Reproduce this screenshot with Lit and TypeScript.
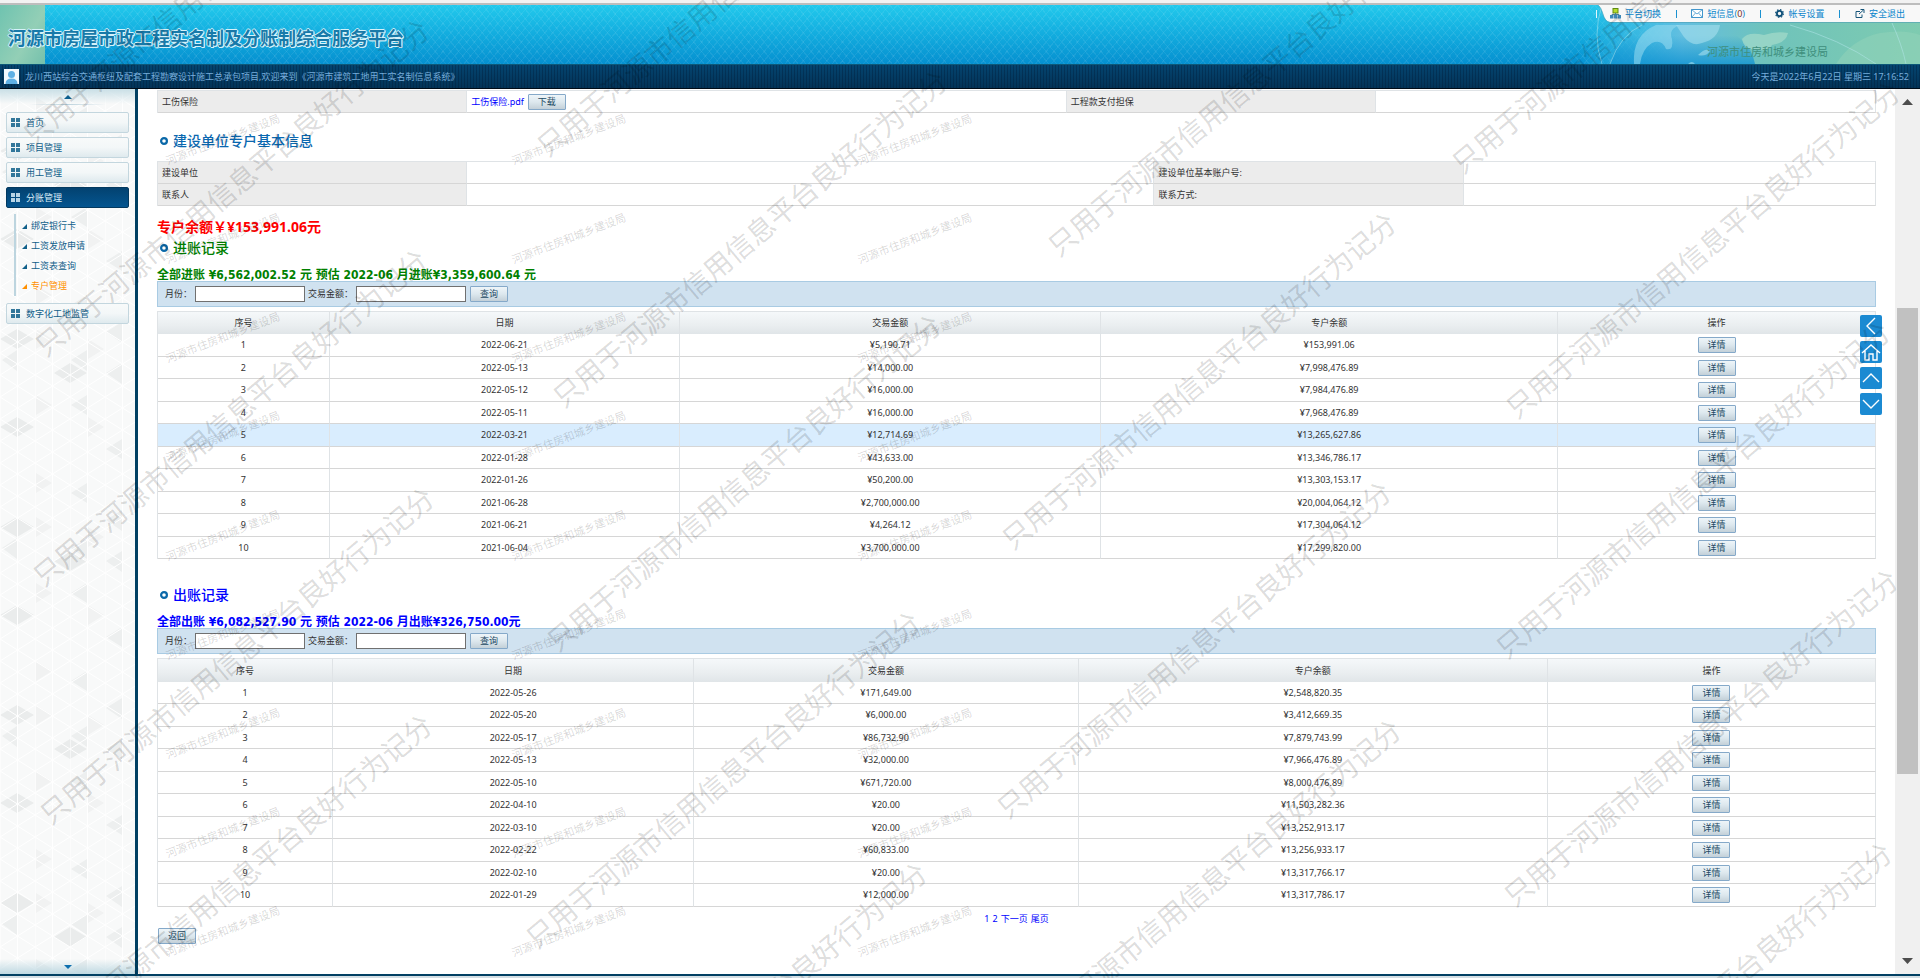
import { LitElement, html, css, svg } from "lit";
import { customElement, property } from "lit/decorators.js";

interface Entry {
  date: string;
  amount: string;
  balance: string;
}

const toEntries = (rows: string[]): Entry[] =>
  rows.map((row) => {
    const [date, amount, balance] = row.split(" ");
    return { date, amount: "¥" + amount, balance: "¥" + balance };
  });

const INCOME = toEntries([
  "2022-06-21 5,190.71 153,991.06",
  "2022-05-13 14,000.00 7,998,476.89",
  "2022-05-12 16,000.00 7,984,476.89",
  "2022-05-11 16,000.00 7,968,476.89",
  "2022-03-21 12,714.69 13,265,627.86",
  "2022-01-28 43,633.00 13,346,786.17",
  "2022-01-26 50,200.00 13,303,153.17",
  "2021-06-28 2,700,000.00 20,004,064.12",
  "2021-06-21 4,264.12 17,304,064.12",
  "2021-06-04 3,700,000.00 17,299,820.00",
]);

const EXPENSE = toEntries([
  "2022-05-26 171,649.00 2,548,820.35",
  "2022-05-20 6,000.00 3,412,669.35",
  "2022-05-17 86,732.90 7,879,743.99",
  "2022-05-13 32,000.00 7,966,476.89",
  "2022-05-10 671,720.00 8,000,476.89",
  "2022-04-10 20.00 11,503,282.36",
  "2022-03-10 20.00 13,252,913.17",
  "2022-02-22 60,833.00 13,256,933.17",
  "2022-02-10 20.00 13,317,766.17",
  "2022-01-29 12,000.00 13,317,786.17",
]);

const buttonStyles = css`
  .btn {
    box-sizing: border-box;
    width: 38px;
    height: 16px;
    padding: 0;
    border: 1px solid #85a9c9;
    border-radius: 1px;
    background: linear-gradient(#eef5f9, #dde8ee 50%, #c3d0d8);
    color: #1d4a63;
    font: inherit;
    line-height: 14px;
    cursor: pointer;
  }
`;

@customElement("water-mark")
export class WaterMark extends LitElement {
  static styles = css`
    :host {
      position: absolute;
      inset: 0;
      overflow: hidden;
      pointer-events: none;
      z-index: 10;
    }
    .layer {
      display: block;
      width: 100%;
      height: 100%;
      font-family: "Noto Sans CJK SC", sans-serif;
    }
    .usage {
      font-size: 28px;
      font-weight: 400;
      fill: rgba(0, 0, 0, 0.15);
    }
    .bureau {
      font-size: 11px;
      fill: rgba(0, 0, 0, 0.17);
    }
  `;

  private usage = [
    [38, 130], [50, 341], [48, 571], [55, 809], [53, 1036],
    [552, 141], [568, 392], [562, 636], [541, 933], [548, 1184],
    [1063, 241], [1017, 534], [1012, 803], [1022, 1041],
    [1467, 158], [1521, 403], [1511, 643], [1519, 891], [1513, 1164],
  ];

  render() {
    const bureau = [172, 518, 864].flatMap((x) =>
      Array.from({ length: 9 }, (_, k) => [x, 159 + 99 * k]),
    );
    return html`<svg class="layer" aria-hidden="true">
      ${this.usage.map(
        ([x, y]) => svg`<text class="usage" x="-14" y="10"
          transform="translate(${x} ${y}) rotate(-40)">只用于河源市信用信息平台良好行为记分</text>`,
      )}
      ${bureau.map(
        ([x, y]) => svg`<text class="bureau" x="-6" y="4"
          transform="translate(${x} ${y}) rotate(-21)">河源市住房和城乡建设局</text>`,
      )}
    </svg>`;
  }
}

@customElement("top-header")
export class TopHeader extends LitElement {
  static styles = css`
    :host {
      display: block;
    }
    a {
      color: #0a86cc;
      text-decoration: none;
    }
    .strip {
      height: 3px;
      background: #f2f2f2;
      border-bottom: 2px solid #bdbdbd;
    }
    .banner {
      position: relative;
      display: flex;
      justify-content: space-between;
      height: 59px;
      background:
        repeating-linear-gradient(50deg, transparent 0 5px, rgba(255, 255, 255, 0.07) 5px 6px),
        repeating-linear-gradient(-50deg, transparent 0 5px, rgba(255, 255, 255, 0.07) 5px 6px),
        linear-gradient(#22c9ec, #14afe0 45%, #0590d0);
    }
    .patch {
      position: absolute;
      left: 0;
      top: 0;
      width: 45px;
      height: 100%;
      background: linear-gradient(120deg, #6fc3b0, #93cfb6 60%, #74c0ac);
    }
    .globe {
      position: absolute;
      right: 0;
      top: 0;
      width: 340px;
      height: 100%;
    }
    .name {
      position: relative;
      margin: 0;
      padding: 21px 0 0 8px;
      font-size: 18px;
      line-height: 24px;
      font-weight: 700;
      color: #187aa9;
      text-shadow: 1px 0 #d5f2fa, -1px 0 #d5f2fa, 0 1px #d5f2fa, 0 -1px #d5f2fa, 1px 1px #d5f2fa;
    }
    .side {
      position: relative;
      display: flex;
      flex-direction: column;
      width: 324px;
    }
    .tools {
      display: flex;
      align-items: center;
      justify-content: space-between;
      height: 17px;
      box-sizing: border-box;
      padding: 0 15px 0 14px;
    }
    .tab {
      position: absolute;
      left: 0;
      top: 0;
      width: 100%;
      height: 18px;
    }
    .tool {
      position: relative;
      display: flex;
      align-items: center;
      gap: 4px;
    }
    .bar {
      position: relative;
      width: 1px;
      height: 8px;
      background: #1b91d0;
    }
    .edge {
      position: absolute;
      left: 0;
      top: 5px;
      width: 1px;
      height: 8px;
      background: #e4f7fc;
    }
    .count {
      color: #7a2a1c;
    }
    .dept {
      padding: 22px 0 0 111px;
      font-size: 11px;
      line-height: 16px;
      color: #3f8f7c;
    }
    .welcome {
      display: flex;
      align-items: center;
      gap: 6px;
      box-sizing: border-box;
      height: 25px;
      padding: 0 11px 0 4px;
      border-top: 1px solid #0d5878;
      border-bottom: 1px solid #000c18;
      background:
        repeating-linear-gradient(90deg, transparent 0 2px, rgba(0, 20, 45, 0.3) 2px 3px),
        linear-gradient(#04446f, #033357);
      color: #77addb;
    }
    .clock {
      margin-left: auto;
    }
  `;

  render() {
    return html`
      <div class="strip"></div>
      <div class="banner">
        <div class="patch"></div>
        <svg class="globe" viewBox="0 0 340 59" preserveAspectRatio="none" aria-hidden="true">
          <defs>
            <linearGradient id="sea">
              <stop offset="0" stop-color="#3bc0e6" stop-opacity="0" />
              <stop offset=".12" stop-color="#47bfe4" stop-opacity=".5" />
              <stop offset=".3" stop-color="#63bfe0" />
              <stop offset=".55" stop-color="#6fc3bb" />
              <stop offset="1" stop-color="#7ecbb0" />
            </linearGradient>
            <linearGradient id="deep" x1="0" y1="0" x2="0" y2="1">
              <stop offset=".3" stop-color="#1193d2" stop-opacity="0" />
              <stop offset="1" stop-color="#1193d2" stop-opacity=".8" />
            </linearGradient>
          </defs>
          <rect width="340" height="59" fill="url(#sea)" />
          <path d="M30 59 Q40 25 70 18 H130 Q170 30 175 59Z" fill="url(#deep)" />
          <path d="M54 59 Q52 30 76 20 H100 Q88 24 92 34 Q94 46 86 44 Q82 34 72 38 Q62 44 60 59Z" fill="#9bdcf0" opacity=".55" />
          <path d="M96 20 H140 Q138 34 122 38 Q112 42 104 32 Z M118 50 q8 -8 12 -4 q-4 6 -12 4z M108 59 q4 -4 7 0z" fill="#a7dfee" opacity=".6" />
          <path d="M162 34 Q168 26 184 30 Q196 26 208 28 Q206 38 192 40 Q188 48 176 44 Q164 46 162 34Z" fill="#a5dccb" opacity=".7" />
          <path d="M256 59 Q272 34 300 28 Q325 24 340 30 V59Z" fill="#93d3ba" opacity=".5" />
          <path d="M22 0 Q12 30 22 59 M30 59 Q40 30 62 20 M210 20 Q260 34 296 59 M312 18 Q322 40 326 59" fill="none" stroke="#b6e8ee" stroke-opacity=".5" />
        </svg>
        <h1 class="name">河源市房屋市政工程实名制及分账制综合服务平台</h1>
        <div class="side">
          <span class="edge"></span>
          <svg class="tab" viewBox="0 0 324 18" preserveAspectRatio="none" aria-hidden="true">
            <path d="M2 0 H324 V17 H14 Q9 16 7 9 Q5 2 2 0Z" fill="#f8f8f8" />
            <path d="M2 0 Q5 2 7 9 Q9 17 14 17.500 H324" fill="none" stroke="#4f9fb4" stroke-opacity=".6" />
          </svg>
          <div class="tools">
            <a class="tool" href="#">
              <svg width="11" height="11" viewBox="0 0 11 11" aria-hidden="true">
                <rect x="3" y="0.500" width="5" height="4.500" fill="#b5dc2c" stroke="#5e8a12" />
                <path d="M5.500 5 V7 M2 8 V6.500 H9 V8" fill="none" stroke="#4a7f9a" />
                <path d="M0 7h3.500v3.500H0z M4 7h3v3.500H4z M7.500 7H11v3.500H7.500z" fill="#3d88b8" />
              </svg>平台切换</a>
            <span class="bar"></span>
            <a class="tool" href="#">
              <svg width="12" height="9" viewBox="0 0 12 9" aria-hidden="true">
                <rect x=".5" y=".5" width="11" height="8" fill="#fff" stroke="#4296cc" />
                <path d="M.5 .5 L6 5 L11.500 .5 M.5 8.500 L4.500 4 M11.500 8.500 L7.500 4" fill="none" stroke="#6badd8" />
              </svg><span>短信息(<span class="count">0</span>)</span></a>
            <span class="bar"></span>
            <a class="tool" href="#">
              <svg width="9" height="9" viewBox="0 0 9 9" aria-hidden="true">
                <circle cx="4.500" cy="4.500" r="2.600" fill="none" stroke="#0e4f78" stroke-width="1.800" />
                <circle cx="4.500" cy="4.500" r="3.900" fill="none" stroke="#0e4f78" stroke-width="1.100" stroke-dasharray="1.500 1.560" />
              </svg>帐号设置</a>
            <span class="bar"></span>
            <a class="tool" href="#">
              <svg width="10" height="9" viewBox="0 0 10 9" aria-hidden="true">
                <path d="M5 2.500 H1 V8.500 H7 V5.500 M4 5 L8.500 1 M5.500 .5 H9 V4" fill="none" stroke="#17557a" />
              </svg>安全退出</a>
          </div>
          <div class="dept">河源市住房和城乡建设局</div>
        </div>
      </div>
      <div class="welcome">
        <svg width="15" height="15" viewBox="0 0 15 15" aria-hidden="true">
          <rect width="15" height="15" fill="#f3f9fd" />
          <circle cx="7.500" cy="5.500" r="3.500" fill="#5fb0e4" />
          <path d="M1.500 15 Q1.500 9.500 7.500 9.500 T13.500 15Z" fill="#5fb0e4" />
        </svg>
        <span>龙川西站综合交通枢纽及配套工程勘察设计施工总承包项目,欢迎来到《河源市建筑工地用工实名制信息系统》</span>
        <span class="clock">今天是2022年6月22日 星期三 17:16:52</span>
      </div>
    `;
  }
}

@customElement("side-menu")
export class SideMenu extends LitElement {
  static styles = css`
    :host {
      position: relative;
      display: flex;
      flex-direction: column;
      box-sizing: border-box;
      width: 138px;
      border-right: 3px solid #014063;
      background: #f8f9f9;
    }
    a {
      color: #11608a;
      text-decoration: none;
    }
    .tiles {
      position: absolute;
      inset: 0;
      width: 100%;
      height: 100%;
    }
    .cap {
      position: relative;
      display: flex;
      justify-content: center;
      align-items: center;
      height: 15px;
      background: linear-gradient(#c9dfe6, rgba(246, 247, 247, 0));
    }
    .cap.low {
      margin-top: auto;
      background: linear-gradient(rgba(246, 247, 247, 0), #bfd9e2);
    }
    .rule {
      position: relative;
      height: 1px;
      margin: 0 29px;
      background: linear-gradient(90deg, transparent, #bcd3dd, transparent);
    }
    .nav {
      position: relative;
      display: flex;
      flex-direction: column;
      gap: 4px;
      padding: 7px 6px;
    }
    .item {
      display: flex;
      align-items: center;
      gap: 6px;
      box-sizing: border-box;
      height: 21px;
      padding: 0 4px;
      border: 1px solid #c3d6de;
      border-radius: 2px;
      background: linear-gradient(#f8fafa, #f3f7f8 50%, #dfeaee);
    }
    .item.open {
      border-color: #03395f;
      background: linear-gradient(#034270, #045590);
      color: #d9edf8;
    }
    .sub {
      display: flex;
      flex-direction: column;
      margin: 2px 0 3px 8px;
      padding: 2px 0 0 6px;
      border-left: 2px solid #bdd5df;
    }
    .leaf {
      display: flex;
      align-items: center;
      gap: 4px;
      height: 20px;
    }
    .leaf.on {
      color: #ff9000;
    }
  `;

  private icon = html`<svg width="9" height="9" viewBox="0 0 9 9" aria-hidden="true">
    <path d="M0 0h4v4H0z M5 0h4v4H5z M0 5h4v4H0z M5 5h4v4H5z" fill="currentColor" opacity=".85" />
  </svg>`;

  private item(label: string, open = false) {
    return html`<a class="item ${open ? "open" : ""}" href="#">${this.icon}<span>${label}</span></a>`;
  }

  private leaf(label: string, on = false) {
    return html`<a class="leaf ${on ? "on" : ""}" href="#">
      <svg width="5" height="5" viewBox="0 0 5 5" aria-hidden="true"><path d="M5 0V5H0Z" fill="currentColor" /></svg>
      <span>${label}</span></a>`;
  }

  render() {
    return html`
      <svg class="tiles" aria-hidden="true">
        <defs>
          <pattern id="mesh" width="35" height="22" patternUnits="userSpaceOnUse">
            <path d="M0 0 L35 22 M35 0 L0 22 M0 0 V22 M17.500 0 V22" fill="none" stroke="#fff" />
          </pattern>
          <pattern id="facets" width="140" height="188" patternUnits="userSpaceOnUse">
            <path d="M0 62 L17 52 L34 62 L17 72Z M54 96 L70 86 L87 96 L70 106Z M0 150 L17 140 L34 150 L17 160Z" fill="#eaecec" />
            <path d="M2 83 L17 73 V94Z M71 83 L87 73 V94Z M106 55 L122 45 V66Z M106 96 L122 86 V107Z M71 128 L87 118 V138Z M106 172 L122 162 V182Z M71 28 L87 18 V38Z" fill="#edefef" />
            <path d="M36 52 L52 62 L36 72Z M36 118 L52 128 L36 138Z M88 62 L104 72 L88 82Z M36 8 L52 18 L36 28Z M88 140 L104 150 L88 160Z" fill="#f1f2f2" />
          </pattern>
        </defs>
        <rect width="100%" height="100%" fill="url(#facets)" />
        <rect width="100%" height="100%" fill="url(#mesh)" />
      </svg>
      <div class="cap">
        <svg width="8" height="4" viewBox="0 0 8 4" aria-hidden="true"><path d="M0 4 L4 0 L8 4Z" fill="#0d5f8e" /></svg>
      </div>
      <div class="rule"></div>
      <nav class="nav">
        ${this.item("首页")} ${this.item("项目管理")} ${this.item("用工管理")} ${this.item("分账管理", true)}
        <div class="sub">
          ${this.leaf("绑定银行卡")} ${this.leaf("工资发放申请")} ${this.leaf("工资表查询")}
          ${this.leaf("专户管理", true)}
        </div>
        ${this.item("数字化工地监管")}
      </nav>
      <div class="cap low">
        <svg width="8" height="4" viewBox="0 0 8 4" aria-hidden="true"><path d="M0 0 L4 4 L8 0Z" fill="#0d6fae" /></svg>
      </div>
    `;
  }
}

@customElement("ledger-block")
export class LedgerBlock extends LitElement {
  @property() heading = "";
  @property() summary = "";
  @property({ attribute: false }) rows: Entry[] = [];
  @property({ attribute: false }) widths: number[] = [];
  @property({ type: Number }) marked = 0;
  @property({ reflect: true }) tone = "income";

  static styles = [
    buttonStyles,
    css`
      :host {
        display: block;
        color: #333;
      }
      .title {
        display: flex;
        align-items: center;
        gap: 5px;
        margin: 0;
        padding-left: 3px;
        font-size: 14px;
        line-height: 20px;
        font-weight: 500;
      }
      .total {
        margin: 11px 0 0;
        font-family: "DejaVu Sans Condensed", "Noto Sans CJK SC", sans-serif;
        font-size: 12px;
        line-height: 12px;
        font-weight: 700;
        white-space: nowrap;
      }
      :host([tone="income"]) .tint {
        color: #008000;
      }
      :host([tone="expense"]) .tint {
        color: #0000ff;
      }
      .filter {
        display: flex;
        align-items: center;
        box-sizing: border-box;
        height: 26px;
        margin-bottom: 4px;
        padding-left: 7px;
        border: 1px solid #a9cbe3;
        background: #d0e2f0;
      }
      .month {
        width: 30px;
      }
      .sum {
        width: 48px;
        margin-left: 3px;
      }
      .field {
        box-sizing: border-box;
        width: 110px;
        height: 16px;
        padding: 0 2px;
        border: 1px solid #707070;
        background: #fff;
        font: inherit;
      }
      .filter .btn {
        margin-left: 4px;
      }
      .grid {
        width: 100%;
        table-layout: fixed;
        border-spacing: 0;
        border-top: 1px solid #dfe3e6;
        border-left: 1px solid #dfe3e6;
        text-align: center;
      }
      .grid th,
      .grid td {
        box-sizing: border-box;
        height: 22px;
        padding: 0;
        border-right: 1px solid #dfe3e6;
        border-bottom: 1px solid #d6d6d6;
        line-height: 12px;
        font-weight: 400;
      }
      .grid th {
        border-bottom: 0;
        background: linear-gradient(#f5f8fa, #eaeef0 60%, #e0e5e8);
      }
      :host([tone="income"]) .row:nth-child(odd) td,
      :host([tone="expense"]) .row:nth-child(even) td,
      :host([tone="expense"]) th {
        height: 23px;
      }
      .row.marked td {
        background: #d9edfe;
      }
      .grid .btn {
        display: block;
        margin: 0 auto;
      }
    `,
  ];

  render() {
    const heads = ["序号", "日期", "交易金额", "专户余额", "操作"];
    return html`
      <h2 class="title tint">
        <svg width="8" height="8" viewBox="0 0 8 8" aria-hidden="true">
          <circle cx="4" cy="4" r="2.900" fill="#fff" stroke="#0a68a8" stroke-width="2.200" />
        </svg>${this.heading}
      </h2>
      <p class="total tint">${this.summary}</p>
      <form class="filter" @submit=${(e: Event) => e.preventDefault()}>
        <label class="month" for="month">月份：</label>
        <input class="field" id="month" type="text" />
        <label class="sum" for="sum">交易金额：</label>
        <input class="field" id="sum" type="text" />
        <button class="btn" type="submit">查询</button>
      </form>
      <table class="grid">
        <colgroup>
          ${this.widths.map((w) => html`<col style="width:${w}%" />`)}
        </colgroup>
        <thead>
          <tr>${heads.map((h) => html`<th scope="col">${h}</th>`)}</tr>
        </thead>
        <tbody>
          ${this.rows.map(
            (r, i) => html`<tr class="row ${i + 1 === this.marked ? "marked" : ""}">
              <td>${i + 1}</td>
              <td>${r.date}</td>
              <td>${r.amount}</td>
              <td>${r.balance}</td>
              <td><button class="btn" type="button">详情</button></td>
            </tr>`,
          )}
        </tbody>
      </table>
    `;
  }
}

@customElement("float-tools")
export class FloatTools extends LitElement {
  static styles = css`
    :host {
      position: absolute;
      top: 226px;
      right: 38px;
      display: flex;
      flex-direction: column;
      gap: 4px;
      z-index: 5;
    }
    .tool {
      width: 22px;
      height: 22px;
      padding: 0;
      border: 0;
      border-radius: 2px;
      background: #1b8ad2;
    }
    .glyph {
      display: block;
      fill: none;
      stroke: #fff;
      stroke-width: 1.4;
    }
  `;

  render() {
    const glyphs: [string, string][] = [
      ["收起", "M15 3 L7 11 L15 19"],
      ["首页", "M2 12 L11 4 L20 12 M5 10 V19 H9 V13 H13 V19 H17 V10"],
      ["向上", "M3 15 L11 7 L19 15"],
      ["向下", "M3 7 L11 15 L19 7"],
    ];
    return glyphs.map(
      ([label, d]) => html`<button class="tool" type="button" aria-label=${label}>
        <svg class="glyph" width="22" height="22" viewBox="0 0 22 22"><path d=${d} /></svg>
      </button>`,
    );
  }
}

@customElement("app-root")
export class AppRoot extends LitElement {
  static styles = [
    buttonStyles,
    css`
      :host {
        position: relative;
        display: flex;
        flex-direction: column;
        box-sizing: border-box;
        min-height: 100vh;
        overflow: hidden;
        background: #fff;
        color: #333;
        font-family: "Noto Sans", "Noto Sans CJK SC", sans-serif;
        font-size: 9px;
        line-height: 14px;
      }
      a {
        color: #0000ff;
        text-decoration: none;
      }
      .body {
        position: relative;
        display: flex;
        flex: 1;
      }
      .content {
        flex: 1;
        min-width: 0;
        padding: 1px 19px 16px 19px;
      }
      .foot {
        height: 2px;
        border-top: 2px solid #014063;
        background: #d3dee4;
      }
      .info {
        width: 100%;
        table-layout: fixed;
        border-spacing: 0;
        border-top: 1px solid #dfe3e6;
        border-left: 1px solid #dfe3e6;
        text-align: left;
      }
      .info th,
      .info td {
        box-sizing: border-box;
        height: 22px;
        padding: 0 4px;
        border-right: 1px solid #dfe3e6;
        border-bottom: 1px solid #d6d6d6;
        font-weight: 400;
      }
      .info th {
        background: #ececec;
      }
      .file {
        display: flex;
        align-items: center;
        gap: 4px;
      }
      .title {
        display: flex;
        align-items: center;
        gap: 5px;
        margin: 0;
        padding: 18px 0 10px 3px;
        font-size: 14px;
        line-height: 20px;
        font-weight: 500;
        color: #0a68b0;
      }
      .balance {
        margin: 10px 0 0;
        font-size: 14px;
        line-height: 22px;
        font-weight: 700;
        color: #ff0000;
      }
      .next {
        margin-top: 26px;
      }
      .pages {
        display: flex;
        justify-content: center;
        gap: 3px;
        margin: 5px 0 2px;
      }
      .back {
        display: block;
        margin-left: 1px;
      }
      .scroll {
        display: flex;
        flex-direction: column;
        align-items: center;
        box-sizing: border-box;
        width: 25px;
        padding: 10px 0;
        background: #f0f0f0;
      }
      .lead {
        flex: 203;
      }
      .thumb {
        flex: 466;
        width: 21px;
        background: #c1c1c1;
      }
      .trail {
        flex: 184;
      }
    `,
  ];

  render() {
    return html`
      <top-header></top-header>
      <div class="body">
        <side-menu></side-menu>
        <main class="content">
          <table class="info">
            <colgroup>
              ${[18, 34.9, 18, 29.1].map((w) => html`<col style="width:${w}%" />`)}
            </colgroup>
            <tbody>
              <tr>
                <th scope="row">工伤保险</th>
                <td>
                  <div class="file"><a href="#">工伤保险.pdf</a><button class="btn" type="button">下载</button></div>
                </td>
                <th scope="row">工程款支付担保</th>
                <td></td>
              </tr>
            </tbody>
          </table>
          <h2 class="title">
            <svg width="8" height="8" viewBox="0 0 8 8" aria-hidden="true">
              <circle cx="4" cy="4" r="2.900" fill="#fff" stroke="#0a68a8" stroke-width="2.200" />
            </svg>建设单位专户基本信息
          </h2>
          <table class="info">
            <colgroup>
              ${[18, 40, 18, 24].map((w) => html`<col style="width:${w}%" />`)}
            </colgroup>
            <tbody>
              <tr>
                <th scope="row">建设单位</th>
                <td></td>
                <th scope="row">建设单位基本账户号:</th>
                <td></td>
              </tr>
              <tr>
                <th scope="row">联系人</th>
                <td></td>
                <th scope="row">联系方式:</th>
                <td></td>
              </tr>
            </tbody>
          </table>
          <p class="balance">专户余额￥¥153,991.06元</p>
          <ledger-block
            tone="income"
            heading="进账记录"
            summary="全部进账 ¥6,562,002.52 元 预估 2022-06 月进账¥3,359,600.64 元"
            marked="5"
            .rows=${INCOME}
            .widths=${[10, 20.4, 24.5, 26.6, 18.5]}
          ></ledger-block>
          <ledger-block
            class="next"
            tone="expense"
            heading="出账记录"
            summary="全部出账 ¥6,082,527.90 元 预估 2022-06 月出账¥326,750.00元"
            .rows=${EXPENSE}
            .widths=${[10.2, 21, 22.4, 27.3, 19.1]}
          ></ledger-block>
          <nav class="pages">
            <a href="#">1</a><a href="#">2</a><a href="#">下一页</a><a href="#">尾页</a>
          </nav>
          <button class="btn back" type="button">返回</button>
        </main>
        <div class="scroll" aria-hidden="true">
          <svg width="11" height="6" viewBox="0 0 11 6"><path d="M0 6 L5.500 0 L11 6Z" fill="#4d4d4d" /></svg>
          <div class="lead"></div>
          <div class="thumb"></div>
          <div class="trail"></div>
          <svg width="11" height="6" viewBox="0 0 11 6"><path d="M0 0 L5.500 6 L11 0Z" fill="#4d4d4d" /></svg>
        </div>
        <float-tools></float-tools>
      </div>
      <div class="foot"></div>
      <water-mark></water-mark>
    `;
  }
}
